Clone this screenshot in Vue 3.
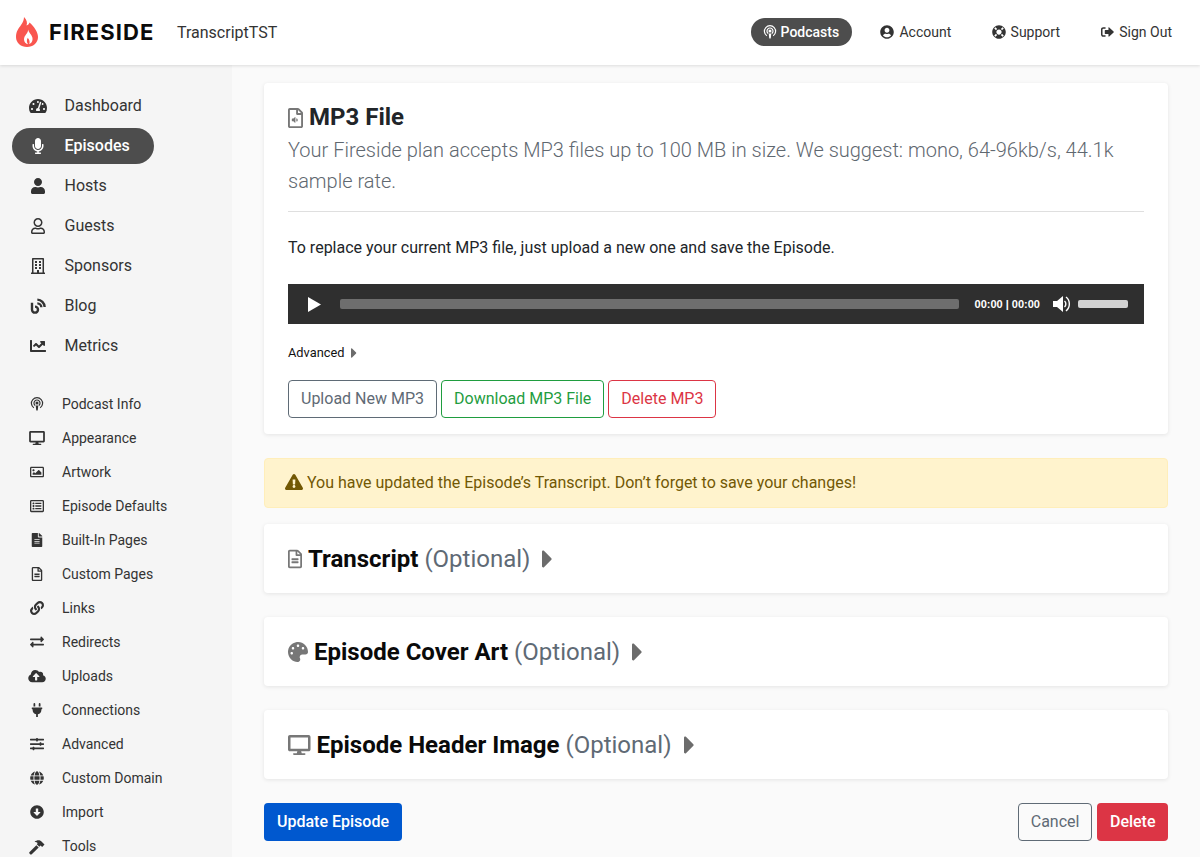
<script setup>
const icons = {
  dashboard: { vb: '0 0 576 512', d: 'M288 32C128.94 32 0 160.94 0 320c0 52.8 14.25 102.26 39.06 144.8 5.61 9.62 16.3 15.2 27.44 15.2h443c11.14 0 21.83-5.58 27.44-15.2C561.75 422.26 576 372.8 576 320c0-159.06-128.94-288-288-288zm0 64c14.71 0 26.58 10.13 30.32 23.65-1.11 2.26-2.64 4.23-3.45 6.67l-9.22 27.67c-5.13 3.49-10.97 6.01-17.64 6.01-17.67 0-32-14.33-32-32S270.33 96 288 96zM96 384c-17.67 0-32-14.33-32-32s14.33-32 32-32 32 14.33 32 32-14.33 32-32 32zm48-160c-17.67 0-32-14.33-32-32s14.33-32 32-32 32 14.33 32 32-14.33 32-32 32zm246.77-72.41l-61.33 184C343.13 347.33 352 364.54 352 384c0 11.72-3.38 22.55-8.88 32H232.88c-5.5-9.45-8.88-20.28-8.88-32 0-33.94 26.5-61.43 59.9-63.59l61.34-184.01c4.17-12.56 17.73-19.45 30.36-15.17 12.57 4.19 19.35 17.79 15.17 30.36zm14.66 57.2l15.52-46.55c3.47-1.29 7.13-2.23 11.05-2.23 17.67 0 32 14.33 32 32s-14.33 32-32 32c-11.38-.01-20.89-6.28-26.57-15.22zM480 384c-17.67 0-32-14.33-32-32s14.33-32 32-32 32 14.33 32 32-14.33 32-32 32z' },
  mic: { vb: '0 0 352 512', d: 'M176 352c53.02 0 96-42.98 96-96V96c0-53.02-42.98-96-96-96S80 42.98 80 96v160c0 53.02 42.98 96 96 96zm160-160h-16c-8.84 0-16 7.16-16 16v48c0 74.8-64.49 134.82-140.79 127.38C96.71 376.89 48 317.11 48 250.3V208c0-8.84-7.16-16-16-16H16c-8.84 0-16 7.16-16 16v40.16c0 89.64 63.97 169.55 152 181.69V464H96c-8.84 0-16 7.16-16 16v16c0 8.84 7.16 16 16 16h160c8.84 0 16-7.16 16-16v-16c0-8.84-7.16-16-16-16h-56v-33.77C285.71 418.47 352 344.9 352 256v-48c0-8.84-7.16-16-16-16z' },
  user: { vb: '0 0 448 512', d: 'M224 256c70.7 0 128-57.3 128-128S294.7 0 224 0 96 57.3 96 128s57.3 128 128 128zm89.6 32h-16.7c-22.2 10.2-46.9 16-72.9 16s-50.6-5.8-72.9-16h-16.7C60.2 288 0 348.2 0 422.4V464c0 26.5 21.5 48 48 48h352c26.5 0 48-21.5 48-48v-41.6c0-74.2-60.2-134.4-134.4-134.4z' },
  userO: { vb: '0 0 448 512', d: 'M313.6 304c-28.7 0-42.5 16-89.6 16-47.1 0-60.8-16-89.6-16C60.2 304 0 364.2 0 438.4V464c0 26.5 21.5 48 48 48h352c26.5 0 48-21.5 48-48v-25.6c0-74.2-60.2-134.4-134.4-134.4zM400 464H48v-25.6c0-47.6 38.8-86.4 86.4-86.4 14.6 0 38.3 16 89.6 16 51.7 0 74.9-16 89.6-16 47.6 0 86.4 38.8 86.4 86.4V464zM224 288c79.5 0 144-64.5 144-144S303.5 0 224 0 80 64.5 80 144s64.5 144 144 144zm0-240c52.9 0 96 43.1 96 96s-43.1 96-96 96-96-43.1-96-96 43.1-96 96-96z' },
  building: { vb: '0 0 448 512', d: 'M128 148v-40c0-6.6 5.4-12 12-12h40c6.6 0 12 5.4 12 12v40c0 6.6-5.4 12-12 12h-40c-6.6 0-12-5.4-12-12zm140 12h40c6.6 0 12-5.4 12-12v-40c0-6.6-5.4-12-12-12h-40c-6.6 0-12 5.4-12 12v40c0 6.6 5.4 12 12 12zm-128 96h40c6.6 0 12-5.4 12-12v-40c0-6.6-5.4-12-12-12h-40c-6.6 0-12 5.4-12 12v40c0 6.6 5.4 12 12 12zm128 0h40c6.6 0 12-5.4 12-12v-40c0-6.6-5.4-12-12-12h-40c-6.6 0-12 5.4-12 12v40c0 6.6 5.4 12 12 12zm-76 84v-40c0-6.6-5.4-12-12-12h-40c-6.6 0-12 5.4-12 12v40c0 6.6 5.4 12 12 12h40c6.6 0 12-5.4 12-12zm76 12h40c6.6 0 12-5.4 12-12v-40c0-6.6-5.4-12-12-12h-40c-6.6 0-12 5.4-12 12v40c0 6.6 5.4 12 12 12zm180 124v36H0v-36c0-6.6 5.4-12 12-12h19.5V24c0-13.3 10.7-24 24-24h337c13.3 0 24 10.7 24 24v440H436c6.6 0 12 5.4 12 12zM79.5 463H192v-67c0-6.6 5.4-12 12-12h40c6.6 0 12 5.4 12 12v67h112.5V49L80 48l-.5 415z' },
  blog: { vb: '0 0 24 24', sw: 3.6, sd: 'M3 7v10.5a4.5 4.5 0 1 0 4.5-4.5M11 8a6 6 0 0 1 6 6M11 2.5a11.5 11.5 0 0 1 11 11' },
  chart: { vb: '0 0 512 512', d: 'M496 384H64V80c0-8.84-7.16-16-16-16H16C7.16 64 0 71.16 0 80v336c0 17.67 14.33 32 32 32h464c8.84 0 16-7.16 16-16v-32c0-8.84-7.16-16-16-16zM464 96H345.94c-21.38 0-32.09 25.85-16.97 40.97l32.4 32.4L288 242.75l-73.37-73.37c-12.5-12.5-32.76-12.5-45.25 0l-68.69 68.69c-6.25 6.25-6.25 16.38 0 22.63l22.62 22.62c6.25 6.25 16.38 6.25 22.63 0L192 237.25l73.37 73.37c12.5 12.5 32.76 12.5 45.25 0l96-96 32.4 32.4c15.12 15.12 40.97 4.41 40.97-16.97V112c0-8.84-7.16-16-16-16z' },
  podcast: { vb: '0 0 24 24', sw: 2, sd: 'M6.6 18.6a9.6 9.6 0 1 1 10.8 0M9 14.6a5.2 5.2 0 1 1 6 0', d: 'M12 7.6a2.6 2.6 0 1 1 0 5.2 2.6 2.6 0 0 1 0-5.2zM9.8 14.4h4.4l-.9 8.2c-.1.9-2.5.9-2.6 0z' },
  desktop: { vb: '0 0 576 512', d: 'M528 0H48C21.5 0 0 21.5 0 48v320c0 26.5 21.5 48 48 48h192l-16 48h-72c-13.3 0-24 10.7-24 24s10.7 24 24 24h272c13.3 0 24-10.7 24-24s-10.7-24-24-24h-72l-16-48h192c26.5 0 48-21.5 48-48V48c0-26.5-21.5-48-48-48zm-16 352H64V64h448v288z' },
  image: { vb: '0 0 512 512', d: 'M464 64H48C21.49 64 0 85.49 0 112v288c0 26.51 21.49 48 48 48h416c26.51 0 48-21.49 48-48V112c0-26.51-21.49-48-48-48zm-6 336H54a6 6 0 0 1-6-6V118a6 6 0 0 1 6-6h404a6 6 0 0 1 6 6v276a6 6 0 0 1-6 6zM128 152c-22.091 0-40 17.909-40 40s17.909 40 40 40 40-17.909 40-40-17.909-40-40-40zM96 352h320v-80l-87.515-87.515c-4.686-4.686-12.284-4.686-16.971 0L192 304l-39.515-39.515c-4.686-4.686-12.284-4.686-16.971 0L96 304v48z' },
  list: { vb: '0 0 512 512', d: 'M464 32H48C21.49 32 0 53.49 0 80v352c0 26.51 21.49 48 48 48h416c26.51 0 48-21.49 48-48V80c0-26.51-21.49-48-48-48zm-6 400H54a6 6 0 0 1-6-6V86a6 6 0 0 1 6-6h404a6 6 0 0 1 6 6v340a6 6 0 0 1-6 6zm-42-92v24c0 6.627-5.373 12-12 12H204c-6.627 0-12-5.373-12-12v-24c0-6.627 5.373-12 12-12h200c6.627 0 12 5.373 12 12zm0-96v24c0 6.627-5.373 12-12 12H204c-6.627 0-12-5.373-12-12v-24c0-6.627 5.373-12 12-12h200c6.627 0 12 5.373 12 12zm0-96v24c0 6.627-5.373 12-12 12H204c-6.627 0-12-5.373-12-12v-24c0-6.627 5.373-12 12-12h200c6.627 0 12 5.373 12 12zm-252 12c0 19.882-16.118 36-36 36s-36-16.118-36-36 16.118-36 36-36 36 16.118 36 36zm0 96c0 19.882-16.118 36-36 36s-36-16.118-36-36 16.118-36 36-36 36 16.118 36 36zm0 96c0 19.882-16.118 36-36 36s-36-16.118-36-36 16.118-36 36-36 36 16.118 36 36z' },
  fileSolid: { vb: '0 0 384 512', d: 'M224 136V0H24C10.7 0 0 10.7 0 24v464c0 13.3 10.7 24 24 24h336c13.3 0 24-10.7 24-24V160H248c-13.2 0-24-10.8-24-24zm64 236c0 6.6-5.4 12-12 12H108c-6.6 0-12-5.4-12-12v-8c0-6.6 5.4-12 12-12h168c6.6 0 12 5.4 12 12v8zm0-64c0 6.6-5.4 12-12 12H108c-6.6 0-12-5.4-12-12v-8c0-6.6 5.4-12 12-12h168c6.6 0 12 5.4 12 12v8zm0-72v8c0 6.6-5.4 12-12 12H108c-6.6 0-12-5.4-12-12v-8c0-6.6 5.4-12 12-12h168c6.6 0 12 5.4 12 12zm96-114.1v6.1H256V0h6.1c6.4 0 12.5 2.5 17 7l97.9 98c4.5 4.5 7 10.6 7 16.9z' },
  file: { vb: '0 0 384 512', d: 'M288 248v28c0 6.6-5.4 12-12 12H108c-6.6 0-12-5.4-12-12v-28c0-6.6 5.4-12 12-12h168c6.6 0 12 5.4 12 12zm-12 72H108c-6.6 0-12 5.4-12 12v28c0 6.6 5.4 12 12 12h168c6.6 0 12-5.4 12-12v-28c0-6.6-5.4-12-12-12zm108-188.1V464c0 26.5-21.5 48-48 48H48c-26.5 0-48-21.5-48-48V48C0 21.5 21.5 0 48 0h204.1C264.8 0 277 5.1 286 14.1L369.9 98c9 8.9 14.1 21.2 14.1 33.9zm-128-80V128h76.1L256 51.9zM336 464V176H232c-13.3 0-24-10.7-24-24V48H48v416h288z' },
  fileAudio: { vb: '0 0 384 512', d: 'M369.9 97.9L286 14C277 5 264.8-.1 252.1-.1H48C21.5 0 0 21.5 0 48v416c0 26.5 21.5 48 48 48h288c26.5 0 48-21.5 48-48V131.9c0-12.7-5.1-25-14.1-34zM332.1 128H256V51.9l76.1 76.1zM48 464V48h160v104c0 13.3 10.7 24 24 24h104v288H48zM190 240v130c0 8-9 11-14 6l-38-34h-28c-7 0-12-5-12-12v-50c0-7 5-12 12-12h28l38-34c5-5 14-2 14 6zM228 260a64 64 0 0 1 0 90l-22-22a34 34 0 0 0 0-46z' },
  link: { vb: '0 0 512 512', d: 'M326.612 185.391c59.747 59.809 58.927 155.698.36 214.59-.11.12-.24.25-.36.37l-67.2 67.2c-59.27 59.27-155.699 59.262-214.96 0-59.27-59.26-59.27-155.7 0-214.96l37.106-37.106c9.84-9.84 26.786-3.3 27.294 10.606.648 17.722 3.826 35.527 9.69 52.721 1.986 5.822.567 12.262-3.783 16.612l-13.087 13.087c-28.026 28.026-28.905 73.66-1.155 101.96 28.024 28.579 74.086 28.749 102.325.51l67.2-67.19c28.191-28.191 28.073-73.757 0-101.83-3.701-3.694-7.429-6.564-10.341-8.569a16.037 16.037 0 0 1-6.947-12.606c-.396-10.567 3.348-21.456 11.698-29.806l21.054-21.055c5.521-5.521 14.182-6.199 20.584-1.731a152.482 152.482 0 0 1 20.522 17.197zM467.547 44.449c-59.261-59.262-155.69-59.27-214.96 0l-67.2 67.2c-.12.12-.25.25-.36.37-58.566 58.892-59.387 154.781.36 214.59a152.454 152.454 0 0 0 20.521 17.196c6.402 4.468 15.064 3.789 20.584-1.731l21.054-21.055c8.35-8.35 12.094-19.239 11.698-29.806a16.037 16.037 0 0 0-6.947-12.606c-2.912-2.005-6.64-4.875-10.341-8.569-28.073-28.073-28.191-73.639 0-101.83l67.2-67.19c28.239-28.239 74.3-28.069 102.325.51 27.75 28.3 26.872 73.934-1.155 101.96l-13.087 13.087c-4.35 4.35-5.769 10.79-3.783 16.612 5.864 17.194 9.042 34.999 9.69 52.721.509 13.906 17.454 20.446 27.294 10.606l37.106-37.106c59.271-59.259 59.271-155.699.001-214.959z' },
  exchange: { vb: '0 0 512 512', d: 'M0 168v-16c0-13.255 10.745-24 24-24h360V80c0-21.367 25.899-32.042 40.971-16.971l80 80c9.372 9.373 9.372 24.569 0 33.941l-80 80C409.956 271.982 384 261.456 384 240v-48H24c-13.255 0-24-10.745-24-24zm488 152H128v-48c0-21.314-25.862-32.08-40.971-16.971l-80 80c-9.372 9.373-9.372 24.569 0 33.941l80 80C102.057 463.997 128 453.437 128 432v-48h360c13.255 0 24-10.745 24-24v-16c0-13.255-10.745-24-24-24z' },
  cloud: { vb: '0 0 640 512', d: 'M537.6 226.6c4.1-10.7 6.4-22.4 6.4-34.6 0-53-43-96-96-96-19.7 0-38.1 6-53.3 16.2C367 64.2 315.3 32 256 32c-88.4 0-160 71.6-160 160 0 2.7.1 5.4.2 8.1C40.2 219.8 0 273.2 0 336c0 79.5 64.5 144 144 144h368c70.7 0 128-57.3 128-128 0-61.9-44-113.6-102.4-125.4zM393.4 288H328v112c0 8.8-7.2 16-16 16h-48c-8.8 0-16-7.2-16-16V288h-65.4c-14.3 0-21.4-17.2-11.3-27.3l105.4-105.4c6.2-6.2 16.4-6.2 22.6 0l105.4 105.4c10.1 10.1 2.9 27.3-11.3 27.3z' },
  plug: { vb: '0 0 384 512', d: 'M320,32a32,32,0,0,0-64,0v96h64Zm48,128H16A16,16,0,0,0,0,176v32a16,16,0,0,0,16,16H32v32A160.07,160.07,0,0,0,160,412.8V512h64V412.8A160.07,160.07,0,0,0,352,256V224h16a16,16,0,0,0,16-16V176A16,16,0,0,0,368,160ZM128,32a32,32,0,0,0-64,0v96h64Z' },
  sliders: { vb: '0 0 512 512', d: 'M496 384H160v-16c0-8.8-7.2-16-16-16h-32c-8.8 0-16 7.2-16 16v16H16c-8.8 0-16 7.2-16 16v32c0 8.8 7.2 16 16 16h80v16c0 8.8 7.2 16 16 16h32c8.8 0 16-7.2 16-16v-16h336c8.8 0 16-7.2 16-16v-32c0-8.8-7.2-16-16-16zm0-160h-80v-16c0-8.8-7.2-16-16-16h-32c-8.8 0-16 7.2-16 16v16H16c-8.8 0-16 7.2-16 16v32c0 8.8 7.2 16 16 16h336v16c0 8.8 7.2 16 16 16h32c8.8 0 16-7.2 16-16v-16h80c8.8 0 16-7.2 16-16v-32c0-8.8-7.2-16-16-16zm0-160H288V48c0-8.8-7.2-16-16-16h-32c-8.8 0-16 7.2-16 16v16H16C7.2 64 0 71.2 0 80v32c0 8.8 7.2 16 16 16h208v16c0 8.8 7.2 16 16 16h32c8.8 0 16-7.2 16-16v-16h208c8.8 0 16-7.2 16-16V80c0-8.8-7.2-16-16-16z' },
  globe: { vb: '0 0 496 512', d: 'M336.5 160C322 70.7 287.8 8 248 8s-74 62.7-88.5 152h177zM152 256c0 22.2 1.2 43.5 3.3 64h185.3c2.1-20.5 3.3-41.8 3.3-64s-1.2-43.5-3.3-64H155.3c-2.1 20.5-3.3 41.8-3.3 64zm324.7-96c-28.6-67.9-86.5-120.4-158-141.6 24.4 33.8 41.2 84.7 50 141.6h108zM177.2 18.4C105.8 39.6 47.8 92.1 19.3 160h108c8.7-56.9 25.5-107.8 49.9-141.6zM487.4 192H372.7c2.1 21 3.3 42.5 3.3 64s-1.2 43-3.3 64h114.6c5.5-20.5 8.6-41.8 8.6-64s-3.1-43.5-8.5-64zM120 256c0-21.5 1.2-43 3.3-64H8.6C3.2 212.5 0 233.8 0 256s3.2 43.5 8.6 64h114.6c-2-21-3.2-42.5-3.2-64zm39.5 96c14.5 89.3 48.7 152 88.5 152s74-62.7 88.5-152h-177zm159.3 141.6c71.4-21.2 129.4-73.7 158-141.6h-108c-8.8 56.9-25.6 107.8-50 141.6zM19.3 352c28.6 67.9 86.5 120.4 158 141.6-24.4-33.8-41.2-84.7-50-141.6h-108z' },
  arrowDown: { vb: '0 0 512 512', d: 'M504 256c0 137-111 248-248 248S8 393 8 256 119 8 256 8s248 111 248 248zM212 140v116h-70.9c-10.7 0-16.1 13-8.5 20.5l114.9 114.3c4.7 4.7 12.2 4.7 16.9 0l114.9-114.3c7.6-7.6 2.2-20.5-8.5-20.5H300V140c0-6.6-5.4-12-12-12h-64c-6.6 0-12 5.4-12 12z' },
  hammer: { vb: '0 0 24 24', d: 'M8.6 5.4C12 2.4 16.8 2.6 19 5.6l3.6 3.7-3.3 3.4-2.3-2.2-1.8 1.7-3.5-3.5 1.2-1.4C12 6.2 10.4 5.6 8.6 5.4zM11.1 10.1l3.3 3.3-9.8 9.4c-.7.7-1.8.7-2.4 0l-.7-.8c-.7-.7-.6-1.8.1-2.4z' },
  account: { vb: '0 0 496 512', d: 'M248 8C111 8 0 119 0 256s111 248 248 248 248-111 248-248S385 8 248 8zm0 96c48.6 0 88 39.4 88 88s-39.4 88-88 88-88-39.4-88-88 39.4-88 88-88zm0 344c-58.7 0-111.3-26.6-146.5-68.2 18.8-35.4 55.6-59.8 98.5-59.8 2.4 0 4.8.4 7.1 1.1 13 4.2 26.6 6.9 40.9 6.9 14.3 0 28-2.7 40.9-6.9 2.3-.7 4.7-1.1 7.1-1.1 42.9 0 79.7 24.4 98.5 59.8C359.3 421.4 306.7 448 248 448z' },
  support: { vb: '0 0 512 512', d: 'M256 8C119 8 8 119 8 256s111 248 248 248 248-111 248-248S393 8 256 8zm173.696 119.559l-63.399 63.399c-10.987-18.559-26.67-34.252-45.255-45.255l63.399-63.399a218.396 218.396 0 0 1 45.255 45.255zM256 352c-53.019 0-96-42.981-96-96s42.981-96 96-96 96 42.981 96 96-42.981 96-96 96zM127.559 82.304l63.399 63.399c-18.559 10.987-34.252 26.67-45.255 45.255l-63.399-63.399a218.372 218.372 0 0 1 45.255-45.255zM82.304 384.441l63.399-63.399c10.987 18.559 26.67 34.252 45.255 45.255l-63.399 63.399a218.396 218.396 0 0 1-45.255-45.255zm302.137 45.255l-63.399-63.399c18.559-10.987 34.252-26.67 45.255-45.255l63.399 63.399a218.403 218.403 0 0 1-45.255 45.255z' },
  signOut: { vb: '0 0 24 24', sw: 2.6, sd: 'M9.5 5H5.6A2.6 2.6 0 0 0 3 7.6v8.8A2.6 2.6 0 0 0 5.6 19h3.9', d: 'M14.5 4.8c0-.7.8-1 1.3-.6l7.5 7c.5.4.5 1.2 0 1.6l-7.5 7c-.5.4-1.3.1-1.3-.6V15.5H9.2c-.6 0-1-.4-1-1v-5c0-.6.4-1 1-1h5.3z' },
  warning: { vb: '0 0 576 512', d: 'M569.517 440.013C587.975 472.007 564.806 512 527.94 512H48.054c-36.937 0-59.999-40.055-41.577-71.987L246.423 24.995c18.467-32.009 64.72-31.951 83.154 0l239.94 415.018zM288 354c-25.405 0-46 20.595-46 46s20.595 46 46 46 46-20.595 46-46-20.595-46-46-46zm-43.673-165.346l7.418 136c.347 6.364 5.609 11.346 11.982 11.346h48.546c6.373 0 11.635-4.982 11.982-11.346l7.418-136c.375-6.874-5.098-12.654-11.982-12.654h-63.383c-6.884 0-12.356 5.78-11.981 12.654z' },
  palette: { vb: '0 0 512 512', d: 'M204.3 5C104.9 24.4 24.8 104.3 5.2 203.4c-37 187 131.7 326.4 258.8 306.7 41.2-6.4 61.4-54.6 42.5-91.7-23.1-45.4 9.9-98.4 60.9-98.4h79.7c35.8 0 64.8-29.6 64.9-65.3C511.5 97.1 368.1-26.9 204.3 5zM96 320c-17.7 0-32-14.3-32-32s14.3-32 32-32 32 14.3 32 32-14.3 32-32 32zm32-128c-17.7 0-32-14.3-32-32s14.3-32 32-32 32 14.3 32 32-14.3 32-32 32zm128-64c-17.7 0-32-14.3-32-32s14.3-32 32-32 32 14.3 32 32-14.3 32-32 32zm128 64c-17.7 0-32-14.3-32-32s14.3-32 32-32 32 14.3 32 32-14.3 32-32 32z' },
  caret: { vb: '0 0 192 512', d: 'M0 384.662V127.338c0-17.818 21.543-26.741 34.142-14.142l128.662 128.662c7.81 7.81 7.81 20.474 0 28.284L34.142 398.804C21.543 411.404 0 402.48 0 384.662z' },
}

const mainNav = [
  { label: 'Dashboard', icon: 'dashboard' },
  { label: 'Episodes', icon: 'mic', active: true },
  { label: 'Hosts', icon: 'user' },
  { label: 'Guests', icon: 'userO' },
  { label: 'Sponsors', icon: 'building' },
  { label: 'Blog', icon: 'blog' },
  { label: 'Metrics', icon: 'chart' },
]

const subNav = [
  { label: 'Podcast Info', icon: 'podcast' },
  { label: 'Appearance', icon: 'desktop' },
  { label: 'Artwork', icon: 'image' },
  { label: 'Episode Defaults', icon: 'list' },
  { label: 'Built-In Pages', icon: 'fileSolid' },
  { label: 'Custom Pages', icon: 'file' },
  { label: 'Links', icon: 'link' },
  { label: 'Redirects', icon: 'exchange' },
  { label: 'Uploads', icon: 'cloud' },
  { label: 'Connections', icon: 'plug' },
  { label: 'Advanced', icon: 'sliders' },
  { label: 'Custom Domain', icon: 'globe' },
  { label: 'Import', icon: 'arrowDown' },
  { label: 'Tools', icon: 'hammer', big: true },
]

const topNav = [
  { label: 'Podcasts', icon: 'podcast', active: true },
  { label: 'Account', icon: 'account' },
  { label: 'Support', icon: 'support' },
  { label: 'Sign Out', icon: 'signOut' },
]

const sections = [
  { title: 'Transcript', icon: 'file', w: 14 },
  { title: 'Episode Cover Art', icon: 'palette', w: 20 },
  { title: 'Episode Header Image', icon: 'desktop', w: 22.5 },
]
</script>

<template>
  <div class="page">
    <header class="topbar">
      <div class="brand">
        <svg class="flame" viewBox="0 0 22 30" width="22" height="30">
          <path fill="#f9564f" d="M8 0C11 3 11.5 6 10.5 8.5 12 8 13 7 13.5 5.5 18 9.5 22 15 22 20 22 26 17 30 11 30 5 30 0 26 0 20 0 14 3 11 5 8 7 5 8 3 8 0Z" />
          <path fill="#fff" d="M12 12.5C12.5 16.5 8 18 8 22.5 8 25 10 27 12 27.2 10.8 25.5 10.3 23 11.8 20.8 13.3 22.8 14.2 24.8 13.2 27 16 26 17.2 23 16.2 20 15.2 17 13 16 12 12.5Z" />
        </svg>
        <span class="wordmark">FIRESIDE</span>
        <span class="podcastName">TranscriptTST</span>
      </div>
      <nav class="topNav">
        <a v-for="item in topNav" :key="item.label" class="topLink" :class="{ active: item.active }">
          <svg class="icon" :viewBox="icons[item.icon].vb" width="14" height="14">
            <path v-if="icons[item.icon].d" :d="icons[item.icon].d" fill="currentColor" fill-rule="evenodd" />
            <path v-if="icons[item.icon].sd" :d="icons[item.icon].sd" fill="none" stroke="currentColor" :stroke-width="icons[item.icon].sw" />
          </svg>
          {{ item.label }}
        </a>
      </nav>
    </header>

    <div class="body">
      <aside class="sidebar">
        <ul class="mainNav">
          <li v-for="item in mainNav" :key="item.label" class="mainItem" :class="{ active: item.active }">
            <span class="navIcon">
              <svg :viewBox="icons[item.icon].vb" width="20" height="16">
                <path v-if="icons[item.icon].d" :d="icons[item.icon].d" fill="currentColor" fill-rule="evenodd" />
                <path v-if="icons[item.icon].sd" :d="icons[item.icon].sd" fill="none" stroke="currentColor" :stroke-width="icons[item.icon].sw" />
              </svg>
            </span>
            {{ item.label }}
          </li>
        </ul>
        <ul class="subNav">
          <li v-for="item in subNav" :key="item.label" class="subItem">
            <span class="navIcon">
              <svg :viewBox="icons[item.icon].vb" width="20" :height="item.big ? 17 : 14">
                <path v-if="icons[item.icon].d" :d="icons[item.icon].d" fill="currentColor" fill-rule="evenodd" />
                <path v-if="icons[item.icon].sd" :d="icons[item.icon].sd" fill="none" stroke="currentColor" :stroke-width="icons[item.icon].sw" />
              </svg>
            </span>
            {{ item.label }}
          </li>
        </ul>
      </aside>

      <main class="content">
        <section class="card mp3Card">
          <h2 class="cardTitle">
            <svg class="titleIcon" :viewBox="icons.fileAudio.vb" width="15" height="20">
              <path :d="icons.fileAudio.d" fill="currentColor" fill-rule="evenodd" />
            </svg>
            MP3 File
          </h2>
          <p class="lead">Your Fireside plan accepts MP3 files up to 100 MB in size. We suggest: mono, 64-96kb/s, 44.1k sample rate.</p>
          <hr class="rule" />
          <p class="replaceText">To replace your current MP3 file, just upload a new one and save the Episode.</p>

          <div class="player">
            <svg class="playIcon" viewBox="0 0 13 15" width="13" height="15"><path d="M0 0l13 7.5L0 15z" fill="#fff" /></svg>
            <div class="track"></div>
            <span class="time">00:00 | 00:00</span>
            <svg class="volIcon" viewBox="0 0 18 18" width="18" height="18">
              <path d="M0 6h4l6-5v16l-6-5H0z" fill="#fff" />
              <path d="M11.5 6a4 4 0 0 1 0 6M13 2a9 9 0 0 1 0 14" fill="none" stroke="#fff" stroke-width="1.4" />
            </svg>
            <div class="volume"></div>
          </div>

          <p class="advanced">
            Advanced
            <svg :viewBox="icons.caret.vb" width="6" height="16"><path :d="icons.caret.d" fill="#6c6c6c" /></svg>
          </p>

          <div class="btnRow">
            <button class="btn btnGrey">Upload New MP3</button>
            <button class="btn btnGreen">Download MP3 File</button>
            <button class="btn btnRed">Delete MP3</button>
          </div>
        </section>

        <div class="alert">
          <svg :viewBox="icons.warning.vb" width="18" height="16"><path :d="icons.warning.d" fill="currentColor" /></svg>
          You have updated the Episode’s Transcript. Don’t forget to save your changes!
        </div>

        <section v-for="item in sections" :key="item.title" class="card collapsed">
          <svg class="titleIcon" :viewBox="icons[item.icon].vb" :width="item.w" height="20">
            <path :d="icons[item.icon].d" fill="currentColor" fill-rule="evenodd" />
          </svg>
          <h2 class="sectionTitle">{{ item.title }}</h2>
          <span class="optional">(Optional)</span>
          <svg class="sectionCaret" :viewBox="icons.caret.vb" width="11" height="30"><path :d="icons.caret.d" fill="#6c6c6c" /></svg>
        </section>

        <div class="footer">
          <button class="btn btnBlue">Update Episode</button>
          <div class="footerRight">
            <button class="btn btnGrey">Cancel</button>
            <button class="btn btnDanger">Delete</button>
          </div>
        </div>
      </main>
    </div>
  </div>
</template>

<style>
html, body {
  margin: 0;
  padding: 0;
  overflow: hidden;
}
</style>

<style scoped>
.page {
  height: 857px;
  overflow: hidden;
  display: flex;
  flex-direction: column;
  font-family: Roboto, "Liberation Sans", sans-serif;
  font-size: 16px;
  color: #212529;
  background: #fafafa;
}

.topbar {
  height: 65px;
  flex: none;
  box-sizing: border-box;
  display: flex;
  align-items: center;
  justify-content: space-between;
  padding: 0 16px 1px;
  background: #fff;
  box-shadow: 0 1px 3px rgba(0, 0, 0, 0.12);
  position: relative;
  z-index: 2;
}

.brand {
  display: flex;
  align-items: center;
}

.flame {
  margin-right: 11px;
}

.wordmark {
  font-family: Inter, sans-serif;
  font-weight: 700;
  font-size: 22px;
  letter-spacing: 1.1px;
  color: #0b0b0b;
  width: 105px;
  white-space: nowrap;
}

.podcastName {
  margin-left: 23px;
  color: #333;
}

.topNav {
  display: flex;
  align-items: center;
  gap: 16.3px;
}

.topLink {
  display: flex;
  align-items: center;
  gap: 5px;
  height: 28px;
  padding: 0 12px;
  border-radius: 14px;
  font-size: 14px;
  color: #333;
  white-space: nowrap;
}

.topLink.active {
  gap: 4px;
  padding-right: 13px;
  background: #4d4d4d;
  color: #fff;
  font-weight: 500;
}

.body {
  flex: 1;
  display: flex;
  min-height: 0;
}

.sidebar {
  width: 232px;
  flex: none;
  box-sizing: border-box;
  background: #f5f5f5;
  padding: 20px 12px 0;
  overflow: hidden;
}

.mainNav,
.subNav {
  list-style: none;
  margin: 0;
  padding: 0;
}

.mainNav {
  display: flex;
  flex-direction: column;
  gap: 4px;
  padding: 2.5px 0 1.5px;
}

.subNav {
  margin-top: 22px;
}

.mainItem {
  width: 142px;
  height: 36px;
  display: flex;
  align-items: center;
  border-radius: 18px;
  color: #333;
}

.mainItem.active {
  background: #4d4d4d;
  color: #fff;
  font-weight: 500;
}

.mainItem .navIcon {
  width: 52.5px;
  padding-left: 16px;
  box-sizing: border-box;
}

.subItem {
  height: 34px;
  display: flex;
  align-items: center;
  font-size: 14px;
  color: #333;
}

.subItem .navIcon {
  width: 50px;
  padding-left: 15px;
  box-sizing: border-box;
}

.navIcon {
  display: flex;
  align-items: center;
  flex: none;
}

.content {
  flex: 1;
  min-width: 0;
  padding: 18px 32px 0;
}

.card {
  background: #fff;
  border-radius: 4px;
  box-shadow: 0 1px 4px rgba(0, 0, 0, 0.09);
  box-sizing: border-box;
  padding: 0 24px;
}

.mp3Card {
  padding: 20px 24px 16px;
}

.cardTitle {
  margin: 0;
  display: flex;
  align-items: center;
  gap: 6px;
  font-size: 24px;
  line-height: 29px;
  font-weight: 700;
  color: #212529;
}

.titleIcon {
  color: #777;
  flex: none;
}

.lead {
  margin: 3px 0 0;
  font-size: 20px;
  font-weight: 300;
  line-height: 31px;
  color: #5f6870;
}

.rule {
  margin: 14px 0 0;
  border: 0;
  border-top: 1px solid #dfdfdf;
}

.replaceText {
  margin: 24px 0 0;
  line-height: 24px;
  color: #212529;
}

.player {
  margin-top: 24px;
  height: 40px;
  display: flex;
  align-items: center;
  background: #2f2f2f;
  padding: 0 16px 0 20px;
}

.playIcon {
  flex: none;
}

.track {
  flex: 1;
  height: 10px;
  margin: 0 16px 0 19px;
  border-radius: 2px;
  background: #6e6e6e;
}

.time {
  font-family: "Liberation Sans", sans-serif;
  font-size: 11px;
  font-weight: 700;
  color: #fff;
  white-space: nowrap;
}

.volIcon {
  margin: 0 7px 0 13px;
  flex: none;
}

.volume {
  width: 50px;
  height: 8px;
  border-radius: 2px;
  background: #d2d2d2;
  flex: none;
}

.advanced {
  margin: 20px 0 0;
  display: flex;
  align-items: center;
  gap: 7px;
  font-size: 12.8px;
  line-height: 17px;
  color: #111;
}

.btnRow {
  margin-top: 19px;
  display: flex;
  gap: 4px;
}

.btn {
  height: 38px;
  box-sizing: border-box;
  padding: 0 12px 2px;
  border-radius: 4px;
  border: 1px solid transparent;
  background: transparent;
  font-family: inherit;
  font-size: 16px;
  white-space: nowrap;
}

.btnGrey {
  border-color: #5f6b76;
  color: #5f6a75;
}

.btnGreen {
  border-color: #1f9d3f;
  color: #1f9d3f;
}

.btnRed {
  border-color: #dc3545;
  color: #dc3545;
}

.btnBlue {
  background: #0058cf;
  color: #fff;
  font-weight: 500;
}

.btnDanger {
  padding: 0 11.5px 2px;
  background: #dc3545;
  color: #fff;
  font-weight: 500;
}

.alert {
  margin-top: 24px;
  height: 50px;
  box-sizing: border-box;
  display: flex;
  align-items: center;
  gap: 4px;
  padding: 0 20px 2px;
  background: #fff3cd;
  border: 1px solid #ffeeba;
  border-radius: 4px;
  color: #725804;
}

.collapsed {
  height: 69px;
  margin-top: 16px;
  display: flex;
  align-items: center;
  gap: 6px;
}

.collapsed + .collapsed {
  margin-top: 24px;
}

.sectionTitle {
  margin: 0;
  font-size: 24px;
  font-weight: 700;
  color: #0a0a0a;
}

.optional {
  font-size: 24px;
  font-weight: 400;
  color: #5f6a75;
}

.sectionCaret {
  margin-left: 6px;
}

.footer {
  margin-top: 24px;
  display: flex;
  justify-content: space-between;
}

.footerRight {
  display: flex;
  gap: 5px;
}
</style>
